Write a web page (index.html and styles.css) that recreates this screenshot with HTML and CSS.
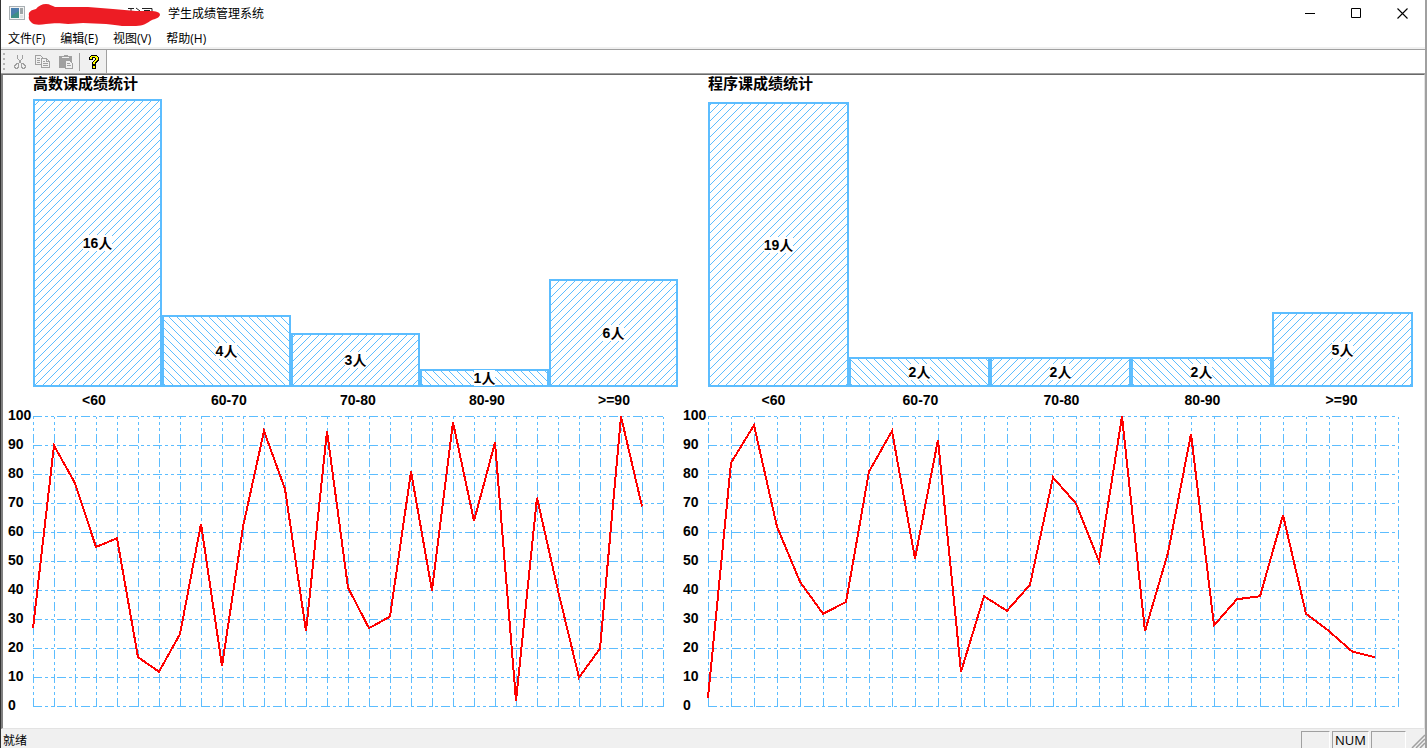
FILE: index.html
```html
<!DOCTYPE html>
<html lang="zh-CN">
<head>
    <meta charset="UTF-8">
    <meta name="viewport" content="width=device-width, initial-scale=1.0">
    <title>学生成绩管理系统</title>
    <link rel="stylesheet" href="styles.css">
</head>
<body>
    <div class="window">
        <header class="titlebar">
            <svg class="app-icon" width="16" height="14" viewBox="0 0 16 14">
                <rect x="0.5" y="0.5" width="15" height="13" fill="#f4f4f4" stroke="#a9b0b4"/>
                <rect x="2" y="2" width="8" height="10" fill="#3f8f86"/>
                <path d="M2 2h8v3l-8 5z" fill="#4c7fae"/>
                <rect x="11" y="2" width="3" height="6" fill="#9fa6a8"/>
                <rect x="11" y="9" width="3" height="3" fill="#dfe3e4"/>
            </svg>
            <svg class="scribble" width="134" height="26" viewBox="0 0 134 26">
                <path d="M100 5.500h6M103 5v4M108 5l4 3M114 5.500h10v4M116 7.500h6" fill="none" stroke="#222" stroke-width="1"/>
                <path d="M1 13C0 9 3 7 8 6C10 3 14 1 18 1C22 1 24 3 27 4L60 4L85 6L108 8L122 8C128 8 132 9 132 12C131 15 127 16 124 17C119 20 115 23 108 23L94 23C90 22 84 22 78 21L55 20C50 20 46 21 40 21C32 20 26 20 18 21C12 22 6 22 4 20C2 18 0 16 1 13Z" fill="#ed1c24"/>
            </svg>
            <h1>学生成绩管理系统</h1>
            <div class="controls">
                <button type="button" aria-label="最小化">
                    <svg width="11" height="11" viewBox="0 0 11 11"><path d="M0 5.5h10" stroke="#000"/></svg>
                </button>
                <button type="button" aria-label="最大化">
                    <svg width="11" height="11" viewBox="0 0 11 11"><path d="M0.5 0.5h9v9h-9z" fill="none" stroke="#000"/></svg>
                </button>
                <button type="button" aria-label="关闭">
                    <svg width="11" height="11" viewBox="0 0 11 11"><path d="M0.5 0.5l10 10M10.5 0.5l-10 10" stroke="#000" stroke-width="1.1"/></svg>
                </button>
            </div>
        </header>

        <nav class="menu">
            <button type="button">文件(F)</button>
            <button type="button">编辑(E)</button>
            <button type="button">视图(V)</button>
            <button type="button">帮助(H)</button>
        </nav>

        <div class="toolbar">
            <div class="tools">
                <span class="grip"></span>
                <button type="button" aria-label="剪切" disabled>
                    <svg width="16" height="16" viewBox="0 0 16 16" fill="none" stroke="#a0a0a0">
                        <path d="M5.5 1v3l4 6M10.5 1v3l-4 6"/>
                        <path d="M4.500 9.500h2v4h-1v1h-2v-1h-1v-2h1v-1h1zM9.500 9.500h2v1h1v1h1v2h-1v1h-2v-1h-1z"/>
                    </svg>
                </button>
                <button type="button" aria-label="复制" disabled>
                    <svg width="16" height="16" viewBox="0 0 16 16" fill="none" stroke="#a0a0a0">
                        <path d="M6 10.5H0.5v-9h5l3 3M2 4.500h3M2 6.500h3M2 8.500h3"/>
                        <path d="M6.500 4.500h5l3 3v6h-8zM11.500 4.500v3h3M8 7.500h2M8 9.500h5M8 11.500h5" fill="#f0f0f0"/>
                    </svg>
                </button>
                <button type="button" aria-label="粘贴" disabled>
                    <svg width="16" height="16" viewBox="0 0 16 16">
                        <path d="M1 2h4l1-1h3l1 1h4v12H1z" fill="#a0a0a0"/>
                        <path d="M4 3.500h7" stroke="#f0f0f0"/>
                        <path d="M7.500 6.500h4l3 3v5h-7z" fill="#f0f0f0" stroke="#a0a0a0"/>
                        <path d="M9 9.500h3M9 11.500h4" stroke="#a0a0a0"/>
                    </svg>
                </button>
                <span class="separator"></span>
                <button type="button" aria-label="关于">
                    <svg width="16" height="16" viewBox="0 0 16 16">
                        <path d="M5 1h6v1h1v1h1v4h-1v1h-1v1h-1v2H6V8h1V7h1V6h1V4H7v2H3V3h1V2h1zM6 11h4v4H6z" fill="#000"/>
                        <path d="M5 2h6v1h1v3h-1v1h-1v1H9v2H7V8h1V7h1V6h1V4H9V3H6v2H4V3h1zM7 12h2v2H7z" fill="#ff0"/>
                    </svg>
                </button>
            </div>
        </div>

        <main class="view">
            <section class="panel">
                <h2>高数课成绩统计</h2>
                <div class="bars">
                    <div class="bar" style="height: 100%"><span>16人</span></div>
                    <div class="bar" style="height: 25%"><span>4人</span></div>
                    <div class="bar" style="height: 18.75%"><span>3人</span></div>
                    <div class="bar" style="height: 6.25%"><span>1人</span></div>
                    <div class="bar" style="height: 37.5%"><span>6人</span></div>
                </div>
                <div class="ranges">
                    <span>&lt;60</span><span>60-70</span><span>70-80</span><span>80-90</span><span>&gt;=90</span>
                </div>
                <div class="scale">
                    <span>100</span><span>90</span><span>80</span><span>70</span><span>60</span><span>50</span><span>40</span><span>30</span><span>20</span><span>10</span><span>0</span>
                </div>
                <div class="plot"><svg id="math"></svg></div>
            </section>

            <section class="panel">
                <h2>程序课成绩统计</h2>
                <div class="bars">
                    <div class="bar" style="height: 98.96%"><span>19人</span></div>
                    <div class="bar" style="height: 10.42%"><span>2人</span></div>
                    <div class="bar" style="height: 10.42%"><span>2人</span></div>
                    <div class="bar" style="height: 10.42%"><span>2人</span></div>
                    <div class="bar" style="height: 26.04%"><span>5人</span></div>
                </div>
                <div class="ranges">
                    <span>&lt;60</span><span>60-70</span><span>70-80</span><span>80-90</span><span>&gt;=90</span>
                </div>
                <div class="scale">
                    <span>100</span><span>90</span><span>80</span><span>70</span><span>60</span><span>50</span><span>40</span><span>30</span><span>20</span><span>10</span><span>0</span>
                </div>
                <div class="plot"><svg id="program"></svg></div>
            </section>
        </main>

        <footer class="statusbar">
            <span class="message">就绪</span>
            <span class="cell"></span>
            <span class="cell num">NUM</span>
            <span class="cell last"></span>
            <svg class="resize" width="16" height="16" viewBox="0 0 16 16" stroke="#a0a0a0" stroke-width="1.5">
                <path d="M3 16L16 3M7 16l9-9M11 16l5-5"/>
            </svg>
        </footer>
    </div>

    <script>
        var math = [27, 90, 77, 55, 58, 17, 12, 25, 63, 14, 62, 95, 75, 26, 95, 41, 27, 31, 81, 40, 98, 64, 91, 2, 72, 40, 10, 20, 100, 69];
        var program = [3, 84, 97, 62, 43, 32, 36, 81, 95, 51, 92, 12, 38, 33, 42, 79, 70, 50, 100, 26, 53, 94, 28, 37, 38, 66, 32, 26, 19, 17];

        function addShape(svg, name, attrs){
            let shape = document.createElementNS('http://www.w3.org/2000/svg', name);
            for (let key in attrs) {
                shape.setAttribute(key, attrs[key]);
            }
            svg.appendChild(shape);
        }

        // one unit per student across, one unit per point down
        function drawLine(id, scores){
            let svg = document.getElementById(id);
            let count = scores.length;
            svg.setAttribute('viewBox', '0 -5 ' + count + ' 110');
            svg.setAttribute('preserveAspectRatio', 'none');

            for (let y = 0; y <= 100; y += 10) {
                addShape(svg, 'line', { class: 'grid', x1: 0, y1: y, x2: count, y2: y });
            }
            for (let x = 0; x <= count; x++) {
                addShape(svg, 'line', { class: 'grid', x1: x, y1: 100, x2: x, y2: 0 });
            }
            let points = scores.map((score, i) => i + ',' + (100 - score)).join(' ');
            addShape(svg, 'polyline', { class: 'curve', points: points });
        }

        drawLine('math', math);
        drawLine('program', program);
    </script>
</body>
</html>
```
FILE: styles.css
```css
*{
    padding: 0;
    margin: 0;
    box-sizing: border-box;
}
body{
    height: 100vh;
    overflow: hidden;
    font-family: "Open Sans", "Noto Sans CJK SC", sans-serif;
    font-size: 12px;
    color: #000;
    background: #fff;
}
button{
    border: none;
    background: none;
    font: inherit;
    color: inherit;
}
svg{
    display: block;
}
.window{
    height: 100%;
    display: flex;
    flex-direction: column;
    border-left: 1px solid #333;
    border-right: 2px solid #a0a0a0;
}
.titlebar{
    height: 27px;
    display: flex;
    align-items: center;
    padding: 0 0 1px 8px;
}
.app-icon{
    margin-right: 2px;
}
.scribble{
    margin: 5px 6px 0 1px;
}
.titlebar h1{
    font-size: 12px;
    font-weight: normal;
}
.controls{
    display: flex;
    margin-left: auto;
}
.controls button{
    width: 46px;
    height: 26px;
    display: flex;
    align-items: center;
    justify-content: center;
}
.menu{
    height: 23px;
    display: flex;
    gap: 15px;
    padding-left: 7px;
    border-bottom: 1px solid #a0a0a0;
    box-shadow: inset 0 -2px #f0f0f0;
}
.toolbar{
    height: 24px;
    border-bottom: 1px solid #a0a0a0;
}
.tools{
    width: 106px;
    height: 100%;
    display: flex;
    align-items: center;
    gap: 7px;
    padding-left: 2px;
    background: #f0f0f0;
    border-right: 1px solid #a0a0a0;
}
.grip{
    width: 2px;
    height: 18px;
    background: repeating-linear-gradient(#b4b4b4 0 2px, #f0f0f0 2px 5px);
}
.separator{
    width: 1px;
    height: 18px;
    margin: 0 -1px 0 -2px;
    background: #a0a0a0;
}
.tools svg{
    shape-rendering: crispEdges;
}
.view{
    flex: 1;
    min-height: 0;
    display: grid;
    grid-template-columns: 675fr 735fr;
    grid-template-rows: minmax(0, 1fr);
    padding: 0 11px 7px 0;
    border-style: solid;
    border-width: 1px 1px 1px 2px;
    border-color: #696969 #e3e3e3 #e3e3e3 #808080;
}
.panel{
    display: grid;
    grid-template-columns: 30px 1fr;
    grid-template-rows: 24px minmax(0, 288fr) 27px minmax(0, 307fr);
    font-family: "Liberation Sans", "Noto Sans CJK SC", sans-serif;
    font-size: 14px;
    font-weight: bold;
    line-height: 16px;
}
.panel h2{
    grid-column: 2;
    font-size: 15px;
    line-height: 18px;
}
.bars{
    grid-column: 2;
    display: flex;
    align-items: flex-end;
}
.bar{
    flex: 1;
    display: flex;
    align-items: center;
    justify-content: center;
    border: 2px solid #5cbdff;
    background-image: url("data:image/svg+xml,%3Csvg xmlns='http://www.w3.org/2000/svg' width='8' height='8' shape-rendering='crispEdges'%3E%3Cpath d='M7 0h1v1h-1zM6 1h1v1h-1zM5 2h1v1h-1zM4 3h1v1h-1zM3 4h1v1h-1zM2 5h1v1h-1zM1 6h1v1h-1zM0 7h1v1h-1z' fill='%235cbdff'/%3E%3C/svg%3E");
    background-position: left bottom;
}
.bar:nth-child(even){
    background-image: url("data:image/svg+xml,%3Csvg xmlns='http://www.w3.org/2000/svg' width='8' height='8' shape-rendering='crispEdges'%3E%3Cpath d='M0 0h1v1h-1zM1 1h1v1h-1zM2 2h1v1h-1zM3 3h1v1h-1zM4 4h1v1h-1zM5 5h1v1h-1zM6 6h1v1h-1zM7 7h1v1h-1z' fill='%235cbdff'/%3E%3C/svg%3E");
    background-position: 1px 100%;
}
.bar span{
    background: #fff;
}
.ranges{
    grid-column: 2;
    display: grid;
    grid-template-columns: repeat(5, 1fr);
    line-height: 27px;
}
.ranges span{
    padding-left: 38%;
}
.scale{
    display: flex;
    flex-direction: column;
    margin: -14px 0 2px;
    padding-left: 5px;
}
.scale span{
    flex: 1;
    display: flex;
    align-items: center;
}
.plot{
    min-height: 0;
    margin: -12px 15px 0 0;
}
.plot svg{
    width: 100%;
    height: 100%;
    overflow: visible;
}
.grid{
    stroke: #5cbdff;
    stroke-width: 1px;
    stroke-dasharray: 9 3 3 3 3 3;
    vector-effect: non-scaling-stroke;
    shape-rendering: crispEdges;
}
.curve{
    fill: none;
    stroke: #f00;
    stroke-width: 2px;
    vector-effect: non-scaling-stroke;
    shape-rendering: crispEdges;
}
.statusbar{
    height: 19px;
    display: flex;
    align-items: center;
    gap: 2px;
    padding-left: 2px;
    background: #f0f0f0;
}
.message{
    flex: 1;
    line-height: 19px;
    padding-top: 4px;
}
.cell{
    width: 29px;
    height: 17px;
    align-self: flex-end;
    border: 1px solid #a0a0a0;
    border-right-color: #fff;
    border-bottom: none;
}
.num{
    width: 37px;
    padding-left: 2px;
    font-size: 13px;
    line-height: 16px;
}
.last{
    width: 35px;
}
.resize{
    align-self: flex-end;
    margin-left: 1px;
}
```
